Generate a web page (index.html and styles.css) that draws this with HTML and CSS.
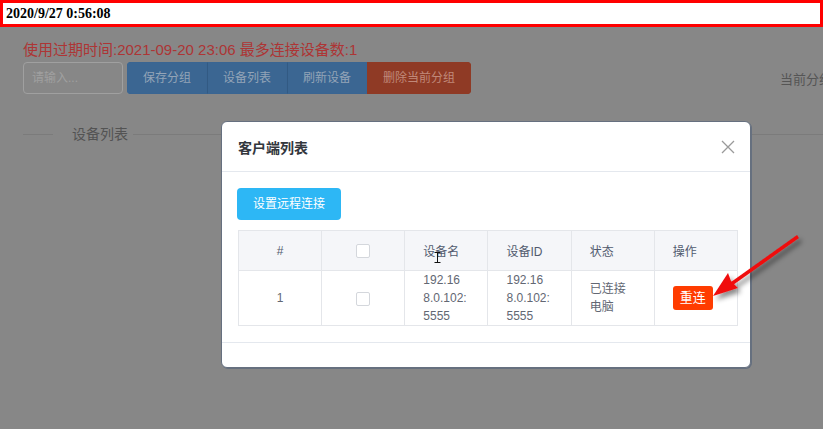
FILE: index.html
```html
<!DOCTYPE html>
<html lang="zh-CN">
<head>
<meta charset="utf-8">
<title>客户端列表</title>
<link rel="stylesheet" href="styles.css">
</head>
<body>
<div class="topbar">2020/9/27 0:56:08</div>
<div class="main">
  <div class="notice">使用过期时间:2021-09-20 23:06 最多连接设备数:1</div>
  <div class="toolbar">
    <div class="input">请输入...</div>
    <div class="btn-group">
      <span class="gbtn">保存分组</span>
      <span class="gbtn">设备列表</span>
      <span class="gbtn">刷新设备</span>
      <span class="gbtn danger">删除当前分组</span>
    </div>
    <div class="current">当前分组</div>
  </div>
  <div class="divider"><span class="divider-line short"></span><span class="divider-text">设备列表</span><span class="divider-line"></span></div>
</div>

<div class="modal">
  <div class="modal-header">
    <span class="modal-title">客户端列表</span>
    <svg class="close" width="14" height="14" viewBox="0 0 14 14"><path d="M1 1L13 13M13 1L1 13" stroke="#9a9a9a" stroke-width="1.3" fill="none"/></svg>
  </div>
  <div class="modal-body">
    <span class="info-btn">设置远程连接</span>
    <table class="table">
      <thead>
        <tr>
          <th class="center">#</th>
          <th class="center"><span class="checkbox"></span></th>
          <th>设备名</th>
          <th>设备ID</th>
          <th>状态</th>
          <th>操作</th>
        </tr>
      </thead>
      <tbody>
        <tr>
          <td class="center">1</td>
          <td class="center"><span class="checkbox"></span></td>
          <td>192.16<br>8.0.102:<br>5555</td>
          <td>192.16<br>8.0.102:<br>5555</td>
          <td>已连接<br>电脑</td>
          <td><span class="err-btn">重连</span></td>
        </tr>
      </tbody>
    </table>
  </div>
  <div class="modal-footer"></div>
</div>

<svg class="annot" width="823" height="429" viewBox="0 0 823 429">
  <defs>
    <filter id="sh" x="-20%" y="-20%" width="140%" height="140%">
      <feDropShadow dx="3" dy="4" stdDeviation="2.5" flood-color="#000" flood-opacity="0.45"/>
    </filter>
  </defs>
  <g filter="url(#sh)">
    <path d="M797 235 L799 238 L733 285 L731 282 Z" fill="#f01010"/>
    <path d="M713 296 L728 273 L731 281 L738 288 Z" fill="#f01010"/>
  </g>
  <path d="M434.5 252.5 H440.5 M437.5 252.5 V262.5 M434.5 262.5 H440.5" stroke="#111" stroke-width="1" fill="none"/>
</svg>
</body>
</html>
```
FILE: styles.css
```css
html, body {
  margin: 0;
  padding: 0;
}
body {
  width: 823px;
  height: 429px;
  overflow: hidden;
  background: #878787;
  font-family: "Liberation Sans", "Noto Sans CJK SC", sans-serif;
  position: relative;
}
.topbar {
  border: 3px solid #ff0000;
  background: #ffffff;
  height: 21px;
  line-height: 21px;
  padding-left: 3px;
  font-family: "Liberation Serif", serif;
  font-weight: bold;
  font-size: 14px;
  color: #000;
}
.main {
  padding: 12px 0 0 23px;
  width: 1000px;
}
.notice {
  font-size: 15px;
  line-height: 22px;
  color: #ad3535;
  white-space: nowrap;
}
.toolbar {
  display: flex;
  align-items: center;
  margin-top: 1px;
  height: 32px;
}
.input {
  box-sizing: border-box;
  width: 100px;
  height: 32px;
  border: 1px solid #a0a0a0;
  border-radius: 4px;
  padding: 0 8px;
  font-size: 12px;
  line-height: 30px;
  color: #a0a0a0;
}
.btn-group {
  display: flex;
  margin-left: 4px;
  border-radius: 4px;
  overflow: hidden;
}
.gbtn {
  box-sizing: border-box;
  height: 32px;
  line-height: 30px;
  padding: 0 15px;
  border: 1px solid #3a6592;
  border-left-color: #325a83;
  background: #3b6692;
  color: #93a4b7;
  font-size: 12px;
  white-space: nowrap;
}
.gbtn:first-child {
  border-left-color: #3a6592;
}
.gbtn.danger {
  background: #8f3a25;
  border-color: #8f3a25;
  color: #c0897a;
}
.current {
  margin-left: 309px;
  font-size: 13px;
  color: #555;
  white-space: nowrap;
}
.divider {
  display: flex;
  align-items: center;
  margin-top: 29px;
  height: 22px;
}
.divider-line {
  flex: 1;
  height: 1px;
  background: #7b7b7b;
}
.divider-line.short {
  flex: 0 0 30px;
}
.divider-text {
  font-size: 14px;
  line-height: 22px;
  color: #535353;
  padding: 0 5px 0 19px;
}
.modal {
  position: absolute;
  left: 221px;
  top: 121px;
  width: 528px;
  background: #fff;
  border: 1px solid #66707f;
  box-shadow: 1px 1px 0 #66707f;
  border-radius: 6px;
  z-index: 2;
}
.modal-header {
  display: flex;
  align-items: center;
  justify-content: space-between;
  height: 49px;
  padding: 0 15px 0 16px;
  border-bottom: 1px solid #e4e8ee;
}
.modal-title {
  font-size: 14px;
  font-weight: bold;
  color: #33373d;
}
.close {
  display: block;
}
.modal-body {
  padding: 16px 11px 16px 16px;
}
.info-btn {
  display: inline-block;
  box-sizing: border-box;
  height: 32px;
  line-height: 32px;
  padding: 0 16px;
  margin-left: -1px;
  background: #2db7f5;
  border-radius: 4px;
  color: #fff;
  font-size: 12px;
  vertical-align: top;
}
.table {
  display: table;
  margin-top: 10px;
  width: 500px;
  border-collapse: collapse;
  table-layout: fixed;
  border: 1px solid #dcdee2;
  font-size: 12px;
}
.table th {
  height: 39px;
  background: #f5f6f9;
  color: #515a6e;
  font-weight: normal;
  text-align: left;
  padding: 0 18px;
  border: 1px solid #e4e6ea;
}
.table td {
  height: 54px;
  line-height: 18px;
  padding: 0 18px;
  color: #626773;
  text-align: left;
  border: 1px solid #e4e6ea;
}
.table .center {
  text-align: center;
}
.checkbox {
  display: inline-block;
  box-sizing: border-box;
  width: 14px;
  height: 14px;
  border: 1px solid #d4d7dc;
  border-radius: 2px;
  background: #fff;
  vertical-align: middle;
}
.err-btn {
  display: inline-block;
  width: 40px;
  height: 24px;
  line-height: 24px;
  text-align: center;
  background: #ff3c00;
  color: #fff;
  font-size: 13px;
  border-radius: 3px;
  vertical-align: middle;
}
.modal-footer {
  height: 24px;
  border-top: 1px solid #e4e8ee;
}
.annot {
  position: absolute;
  left: 0;
  top: 0;
  z-index: 3;
  pointer-events: none;
}
```
